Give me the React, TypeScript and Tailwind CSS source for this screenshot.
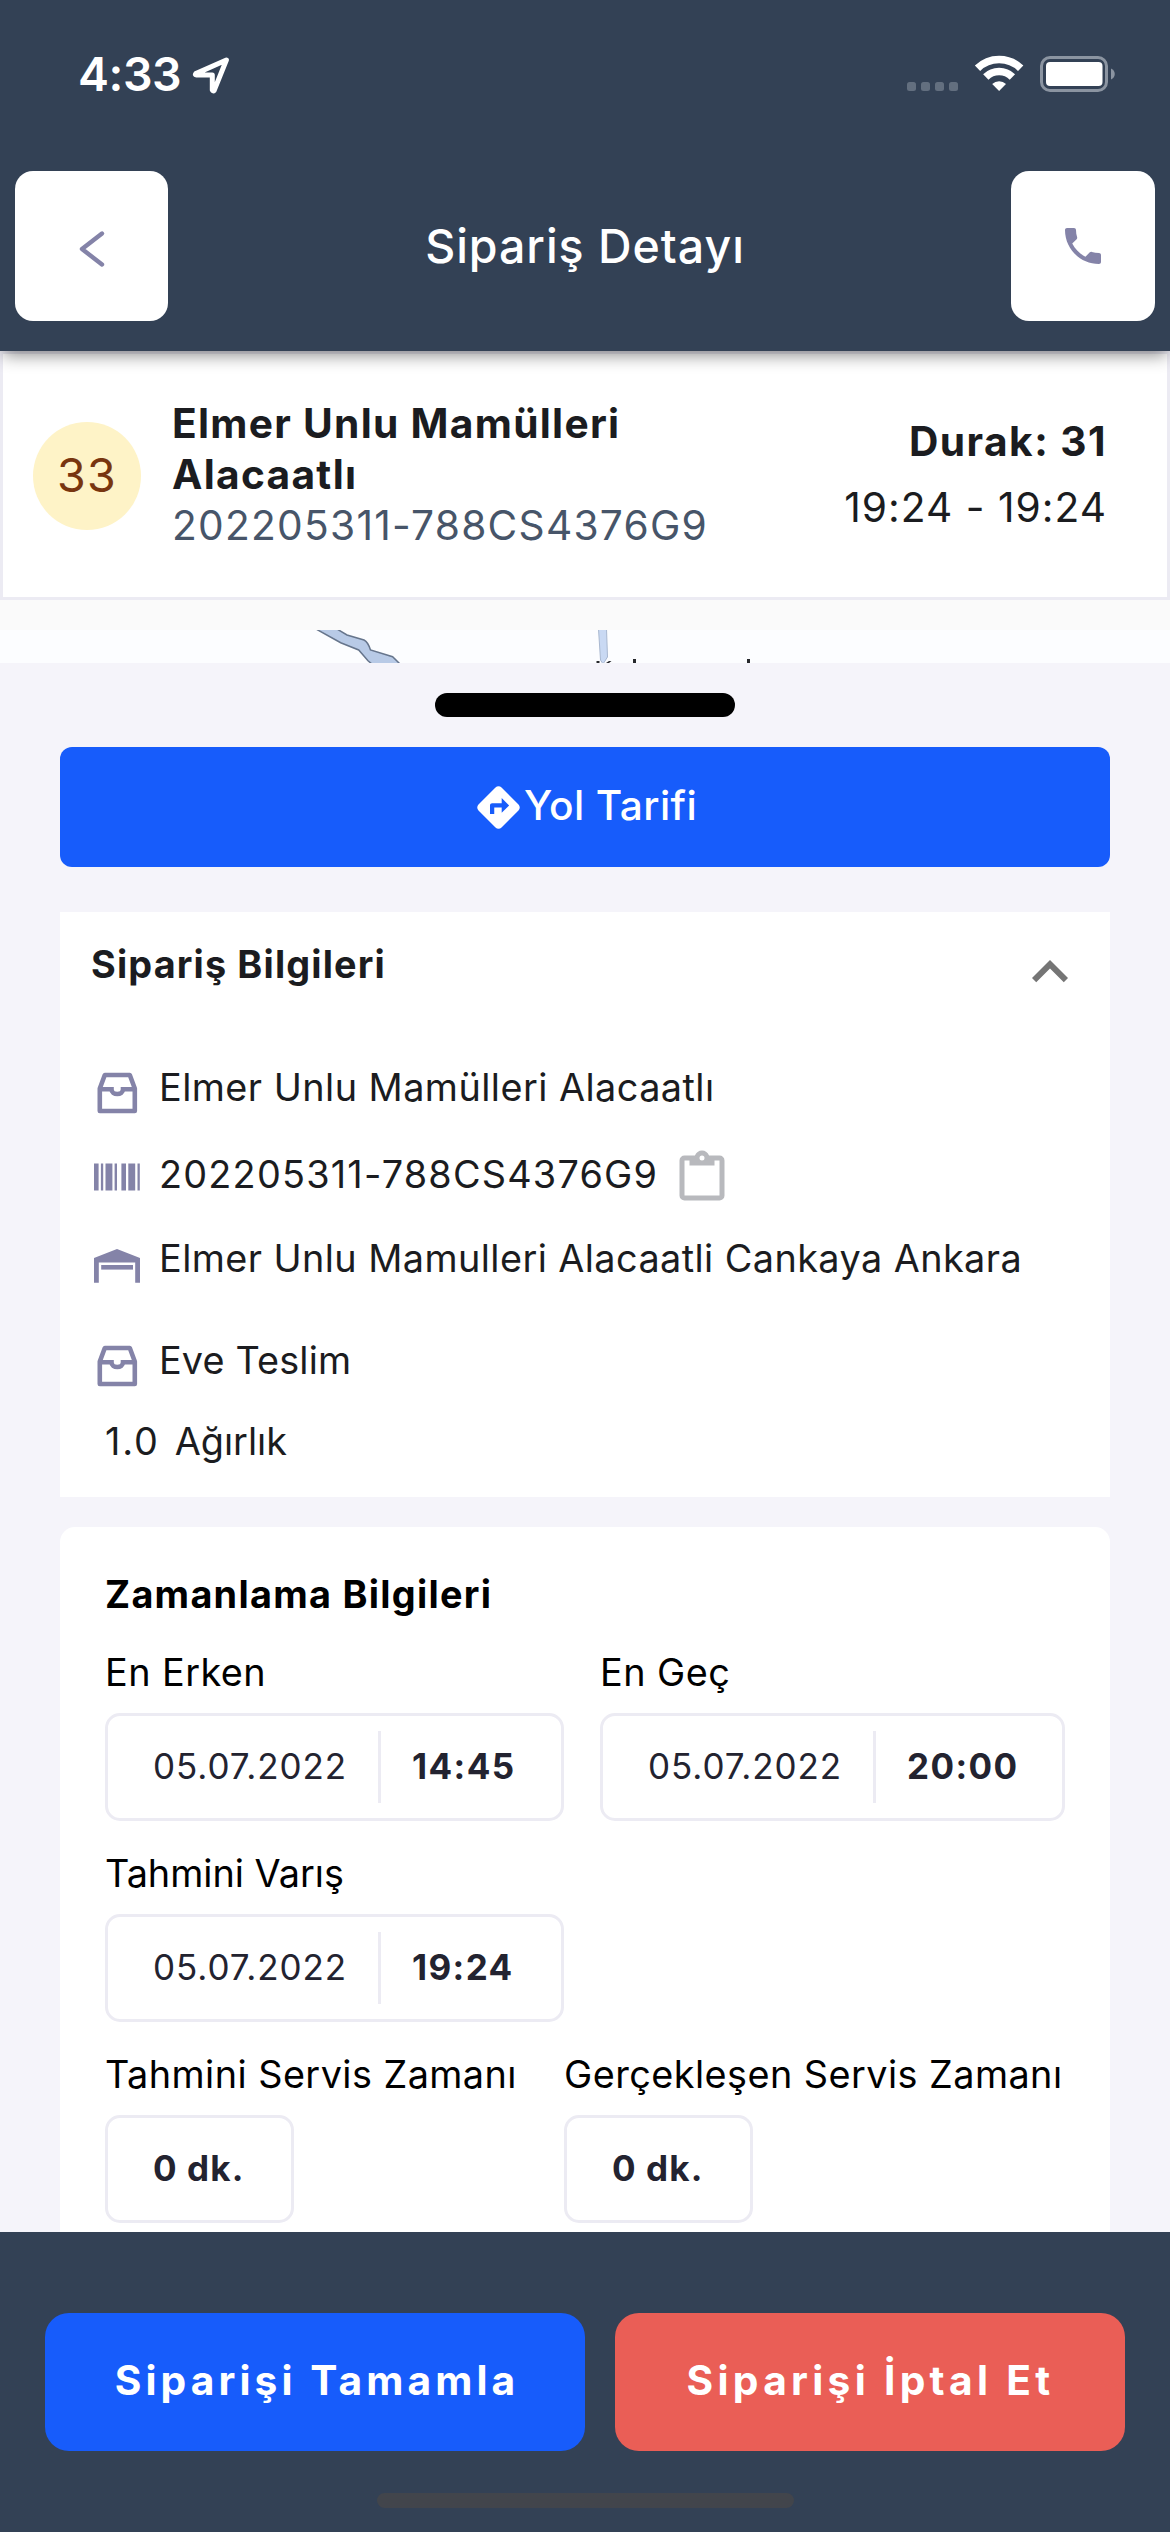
import type { ReactNode } from "react";
import { MdDirections, MdExpandLess, MdPhone } from "react-icons/md";

function StatusBar() {
  return (
    <div className="flex h-[148px] items-center pl-[78px] pr-[55px]">
      <span className="text-[46.5px] leading-[56px] font-semibold tracking-[-0.46px]">4:33</span>
      <svg className="ml-[10px]" width="42" height="42" viewBox="191 53 42 42" fill="none">
        <path
          d="M226.4 60 195.8 73.6Q194.6 75 196.2 75H212.3V90Q213 91.6 214.2 90.4Z"
          stroke="white"
          strokeWidth="5"
          strokeLinejoin="round"
        />
      </svg>
      <svg className="ml-auto" width="208" height="48" viewBox="907 50 208 48" fill="none">
        <g fill="#636f7f">
          <rect x="907" y="82" width="9" height="9" rx="2.5" />
          <rect x="921" y="82" width="9" height="9" rx="2.5" />
          <rect x="935" y="82" width="9" height="9" rx="2.5" />
          <rect x="949" y="82" width="9" height="9" rx="2.5" />
        </g>
        <g stroke="white" strokeWidth="7.6">
          <path d="M977.5 68.3A31 31 0 0 1 1020.7 68.3" />
          <path d="M985.8 77A19 19 0 0 1 1012.4 77" />
        </g>
        <path d="M999.1 91 992.2 84.1A9.8 9.8 0 0 1 1006 84.1Z" fill="white" />
        <rect x="1041.5" y="57.5" width="65" height="33" rx="8.5" stroke="#8b94a1" strokeWidth="3" />
        <rect x="1046" y="62" width="56.5" height="24" rx="4" fill="white" />
        <path d="M1111 68.5C1116 70.5 1116 77.5 1111 79.5Z" fill="#8b94a1" />
      </svg>
    </div>
  );
}

function Header() {
  return (
    <header className="relative z-10 h-[351px] bg-[#334155] text-white shadow-[0_7px_16px_-3px_rgba(0,0,0,0.46)]">
      <StatusBar />
      <div className="mt-[23px] flex h-[150px] items-center justify-between">
        <button className="ml-[15px] flex h-[150px] w-[153px] items-center justify-center rounded-[18px] bg-white">
          <svg className="mt-[6px]" width="36" height="44" viewBox="74 227 36 44" fill="none">
            <path d="M102 233.5 82 249 102 264.5" stroke="#8483a8" strokeWidth="4.4" strokeLinecap="round" strokeLinejoin="round" />
          </svg>
        </button>
        <h1 className="mr-[9px] text-[46.5px] leading-[56px] font-medium tracking-[0.97px]">Sipariş Detayı</h1>
        <button className="mr-[15px] flex h-[150px] w-[144px] items-center justify-center rounded-[18px] bg-white">
          <MdPhone className="size-12 text-[#8483a8]" />
        </button>
      </div>
    </header>
  );
}

function StopCard() {
  return (
    <section className="flex h-[249px] items-center border-[3px] border-[#ecebf3] bg-white pr-[60px] pl-[30px] text-[40.7px] text-[#1b1c20]">
      <div className="flex size-[108px] items-center justify-center rounded-full bg-[#fef3c7] text-[46.5px] tracking-[1.2px] text-[#78350f]">
        33
      </div>
      <div className="mb-[2px] ml-[31px] leading-[51px]">
        <div className="w-[480px] font-bold tracking-[1.29px]">Elmer Unlu Mamülleri Alacaatlı</div>
        <div className="tracking-[1.25px] text-[#475569]">202205311-788CS4376G9</div>
      </div>
      <div className="mb-[2px] ml-auto text-right leading-[66px]">
        <div className="font-bold tracking-[1.45px]">Durak: 31</div>
        <div className="tracking-[1.02px]">19:24 - 19:24</div>
      </div>
    </section>
  );
}

function MapStrip() {
  return (
    <svg className="mt-[30px] block" width="1170" height="33" viewBox="0 630 1170 33">
      <rect y="630" width="1170" height="33" fill="#fcfdff" />
      <path
        d="M316 629 340.7 642.7 358.7 650 368 660.7 373 665H401L399 663 392.6 656.7 370.5 650Q368 642 364 640L347 635 337 629Z"
        fill="#b8cae6"
        stroke="#66758c"
        strokeWidth="1.5"
      />
      <path d="M598.5 629 600.5 660 603 664 607.5 657 606.5 629Z" fill="#c9d9f3" stroke="#a9b8d0" strokeWidth="1" />
      <g fill="#26282c">
        <rect x="596.5" y="661" width="3" height="2" />
        <path d="M606 663 609 661H611.5L609 663Z" />
        <rect x="633" y="659" width="3" height="4" />
        <rect x="747" y="659" width="3" height="4" />
      </g>
    </svg>
  );
}

function InboxIcon() {
  return (
    <svg className="mt-[11px]" width="54" height="54" viewBox="90 1066 54 54" fill="none" stroke="#8483a8" strokeWidth="4.6" strokeLinejoin="round">
      <path d="M104.8 1075H129.8L134.8 1088.5V1111H99.8V1088.5Z" />
      <path d="M99.8 1089.2H111.5C111.5 1095.6 123 1095.6 123 1089.2H134.8" strokeLinejoin="miter" />
    </svg>
  );
}

function BarcodeIcon() {
  return (
    <svg className="mt-[5px]" width="54" height="54" viewBox="0 0 54 54" fill="#8483a8">
      <path d="M4 13.5h4.6v27H4zM10.9 13.5h2.3v27h-2.3zM15.5 13.5h6.9v27h-6.9zM24.6 13.5h2.4v27h-2.4zM31.4 13.5h4.6v27h-4.6zM38.3 13.5h6.9v27h-6.9zM47.5 13.5h2.3v27h-2.3z" />
    </svg>
  );
}

function WarehouseIcon() {
  return (
    <svg className="mt-[14px]" width="54" height="54" viewBox="90 1238 54 54" fill="#8483a8">
      <path d="M94 1281.8V1257L117 1248 140 1257V1281.8H135.2V1261.5H98.8V1281.8Z" />
      <path d="M101.2 1264h31.8v4.6h-31.8z" />
    </svg>
  );
}

function ClipboardIcon() {
  return (
    <svg className="mt-[7px] ml-[14px]" width="60" height="60" viewBox="0 0 24 24" fill="#b8b9bd">
      <path d="M19 3H14.82C14.4 1.84 13.3 1 12 1 10.7 1 9.6 1.84 9.18 3H5A2 2 0 0 0 3 5V19A2 2 0 0 0 5 21H19A2 2 0 0 0 21 19V5A2 2 0 0 0 19 3M12 3A1 1 0 0 1 13 4 1 1 0 0 1 12 5 1 1 0 0 1 11 4 1 1 0 0 1 12 3M7 7H17V5H19V19H5V5H7V7Z" />
    </svg>
  );
}

function OrderInfo() {
  return (
    <section className="mt-[45px] h-[585px] bg-white pl-[30px] text-[37.8px] leading-[46px] text-[#1b1c20]">
      <div className="flex h-[104px] items-center justify-between pr-6 pl-px">
        <h2 className="font-bold tracking-[1.15px]">Sipariş Bilgileri</h2>
        <MdExpandLess className="mt-4 size-[72px] text-[#757575]" />
      </div>
      <div className="mt-[27px] flex h-[88px] items-center">
        <InboxIcon />
        <span className="ml-[15px] tracking-[0.46px]">Elmer Unlu Mamülleri Alacaatlı</span>
      </div>
      <div className="flex h-[86px] items-center">
        <BarcodeIcon />
        <span className="ml-[15px] tracking-[1.22px]">202205311-788CS4376G9</span>
        <ClipboardIcon />
      </div>
      <div className="flex h-[83px] items-center">
        <WarehouseIcon />
        <span className="mb-[2px] ml-[15px] tracking-[0.43px]">Elmer Unlu Mamulleri Alacaatli Cankaya Ankara</span>
      </div>
      <div className="flex h-[120px] items-center">
        <InboxIcon />
        <span className="ml-[15px] tracking-[0.15px]">Eve Teslim</span>
      </div>
      <div className="flex h-[42px] items-center pl-[15px]">
        <span className="tracking-[1.85px]">1.0</span>
        <span className="ml-[15px]">Ağırlık</span>
      </div>
    </section>
  );
}

function Field({ label, className, children }: { label: string; className: string; children: ReactNode }) {
  return (
    <div>
      <div className="h-[82px] text-[37.8px] leading-[82px] whitespace-nowrap">{label}</div>
      <div className={`flex h-[108px] items-center rounded-[15px] border-[3px] border-[#ecebf3] pb-px pl-[45px] text-[35px] text-[#232330] ${className}`}>
        {children}
      </div>
    </div>
  );
}

function DateTime({ date, time }: { date: string; time: string }) {
  return (
    <>
      <span className="w-[225px] tracking-[0.95px]">{date}</span>
      <span className="h-[72px] w-[3px] bg-[#ecebf3]" />
      <span className="ml-[31px] font-bold tracking-[1.4px]">{time}</span>
    </>
  );
}

function Timing() {
  return (
    <section className="mt-[30px] h-[705px] rounded-t-[15px] bg-white px-[45px] pt-[37px] text-black">
      <h2 className="mb-[7px] h-[60px] text-[37.8px] leading-[60px] font-bold tracking-[1.28px]">Zamanlama Bilgileri</h2>
      <div className="flex gap-9 tracking-[0.45px]">
        <Field label="En Erken" className="w-[459px]">
          <DateTime date="05.07.2022" time="14:45" />
        </Field>
        <Field label="En Geç" className="w-[465px]">
          <DateTime date="05.07.2022" time="20:00" />
        </Field>
      </div>
      <div className="mt-[11px] flex">
        <Field label="Tahmini Varış" className="w-[459px]">
          <DateTime date="05.07.2022" time="19:24" />
        </Field>
      </div>
      <div className="mt-[11px] grid grid-cols-[459px_1fr] tracking-[0.45px]">
        <Field label="Tahmini Servis Zamanı" className="w-[189px]">
          <span className="font-bold tracking-[1.1px]">0 dk.</span>
        </Field>
        <Field label="Gerçekleşen Servis Zamanı" className="w-[189px]">
          <span className="font-bold tracking-[1.1px]">0 dk.</span>
        </Field>
      </div>
    </section>
  );
}

function Footer() {
  return (
    <footer className="h-[300px] bg-[#334155] px-[45px] pt-[81px] text-[40.7px] font-bold text-white">
      <div className="flex gap-[30px]">
        <button className="h-[138px] w-[540px] rounded-[24px] bg-[#175cfb] pb-[2px] pl-1 tracking-[4.1px]">Siparişi Tamamla</button>
        <button className="h-[138px] w-[510px] rounded-[24px] bg-[#ea5e56] pb-[2px] pl-px tracking-[4.3px]">Siparişi İptal Et</button>
      </div>
      <div className="mx-auto mt-[42px] h-[15px] w-[417px] rounded-full bg-[#42454c]" />
    </footer>
  );
}

export default function App() {
  return (
    <div className="h-[2532px] w-[1170px] overflow-hidden bg-[#fafafa] font-['Inter',sans-serif]">
      <Header />
      <StopCard />
      <MapStrip />
      <main className="h-[1569px] bg-[#f5f4fa] px-[60px] pt-[30px]">
        <div className="mx-auto h-6 w-[300px] rounded-full bg-black" />
        <button className="mt-[30px] flex h-[120px] w-full items-center justify-center rounded-xl bg-[#175cfb] text-[40.7px] font-medium tracking-[0.37px] text-white">
          <MdDirections className="size-[51px]" />
          <span className="mb-[2px]">Yol Tarifi</span>
        </button>
        <OrderInfo />
        <Timing />
      </main>
      <Footer />
    </div>
  );
}
